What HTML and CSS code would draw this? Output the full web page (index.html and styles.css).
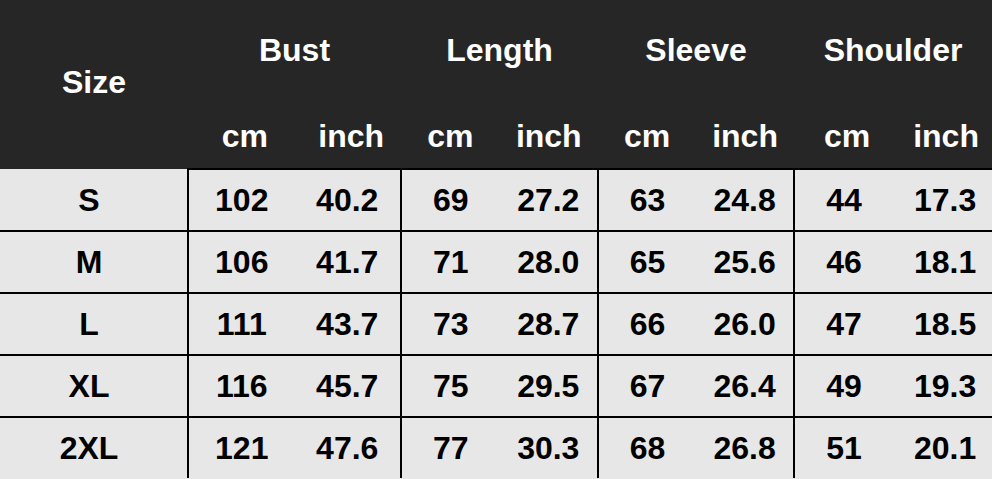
FILE: index.html
```html
<!DOCTYPE html>
<html>
<head>
<meta charset="utf-8">
<link rel="stylesheet" href="styles.css">
</head>
<body>
<table class="size-table">
  <colgroup>
    <col class="c-size">
    <col class="c-bust"><col class="c-bust">
    <col class="c-len"><col class="c-len">
    <col class="c-slv"><col class="c-slv">
    <col class="c-sh"><col class="c-sh">
  </colgroup>
  <thead>
    <tr class="head-top">
      <th rowspan="2" class="size-head">Size</th>
      <th colspan="2">Bust</th>
      <th colspan="2">Length</th>
      <th colspan="2">Sleeve</th>
      <th colspan="2">Shoulder</th>
    </tr>
    <tr class="head-unit">
      <th class="nudge">cm</th><th class="nudge">inch</th>
      <th>cm</th><th>inch</th>
      <th>cm</th><th>inch</th>
      <th class="nudge">cm</th><th class="nudge">inch</th>
    </tr>
  </thead>
  <tbody>
    <tr>
      <td class="size">S</td>
      <td class="first">102</td><td>40.2</td>
      <td class="first">69</td><td>27.2</td>
      <td class="first">63</td><td>24.8</td>
      <td class="first">44</td><td class="nudge">17.3</td>
    </tr>
    <tr>
      <td class="size">M</td>
      <td class="first">106</td><td>41.7</td>
      <td class="first">71</td><td>28.0</td>
      <td class="first">65</td><td>25.6</td>
      <td class="first">46</td><td class="nudge">18.1</td>
    </tr>
    <tr>
      <td class="size">L</td>
      <td class="first">111</td><td>43.7</td>
      <td class="first">73</td><td>28.7</td>
      <td class="first">66</td><td>26.0</td>
      <td class="first">47</td><td class="nudge">18.5</td>
    </tr>
    <tr>
      <td class="size">XL</td>
      <td class="first">116</td><td>45.7</td>
      <td class="first">75</td><td>29.5</td>
      <td class="first">67</td><td>26.4</td>
      <td class="first">49</td><td class="nudge">19.3</td>
    </tr>
    <tr>
      <td class="size">2XL</td>
      <td class="first">121</td><td>47.6</td>
      <td class="first">77</td><td>30.3</td>
      <td class="first">68</td><td>26.8</td>
      <td class="first">51</td><td class="nudge">20.1</td>
    </tr>
  </tbody>
</table>
</body>
</html>
```
FILE: styles.css
```css
html, body {
  margin: 0;
  padding: 0;
  background: #e7e7e7;
}
body {
  width: 992px;
  height: 479px;
  overflow: hidden;
  font-family: "Liberation Sans", Arial, sans-serif;
  font-weight: bold;
}
.size-table {
  width: 992px;
  table-layout: fixed;
  border-collapse: collapse;
  border-spacing: 0;
  font-size: 32px;
}
.c-size { width: 188px; }
.c-bust { width: 106.5px; }
.c-len { width: 98.5px; }
.c-slv { width: 98px; }
.c-sh { width: 99px; }

.size-table th,
.size-table td {
  padding: 0;
  text-align: center;
  vertical-align: middle;
  line-height: 1;
}
.size-table thead th {
  background: #262626;
  color: #ffffff;
  font-weight: bold;
}
.head-top th {
  height: 100px;
}
.head-top th.size-head {
  padding-bottom: 6px;
}
.head-unit th {
  height: 69px;
  vertical-align: top;
  padding-top: 20px;
  box-sizing: border-box;
  border-bottom: 2px solid #000;
}
.size-table thead th.nudge {
  padding-left: 7px;
}
.size-table tbody td {
  height: 60px;
  color: #000;
  background: #e7e7e7;
  border-bottom: 2px solid #000;
}
.size-table tbody td.nudge {
  padding-left: 5px;
}
.size-table tbody tr:last-child td {
  border-bottom: none;
}
.size-table tbody td.size {
  padding-right: 9px;
  border-right: 2px solid #000;
}
.size-table tbody td.first {
  border-left: 2px solid #000;
}
```
